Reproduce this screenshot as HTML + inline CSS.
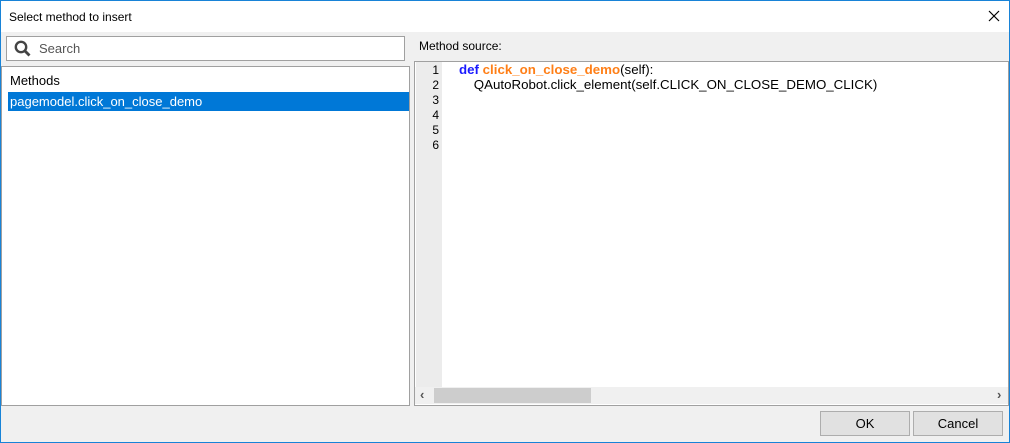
<!DOCTYPE html>
<html><head><style>
body{margin:0;width:1010px;height:443px;overflow:hidden;font-family:"Liberation Sans",sans-serif;font-size:12px;color:#000;}
.win{position:absolute;left:0;top:0;width:1008px;height:441px;border:1px solid #1883d7;background:#f0f0f0;}
.title{position:absolute;left:0;top:0;width:1008px;height:31px;background:#fff;}
.abs{position:absolute;}
</style></head><body>
<div class="win">
<div class="title"><div class="abs" style="left:8px;top:9px;">Select method to insert</div>
<svg class="abs" style="left:987px;top:9px" width="12" height="12"><path d="M1 1L11 11M11 1L1 11" stroke="#000" stroke-width="1.2"/></svg></div>
<div class="abs" style="left:5px;top:35px;width:397px;height:23px;background:#fff;border:1px solid #a0a0a0;">
<svg class="abs" style="left:7px;top:3px" width="18" height="18"><circle cx="7" cy="7" r="5.2" fill="none" stroke="#444" stroke-width="2.4"/><path d="M10.5 10.5L15.5 15.5" stroke="#444" stroke-width="2.8"/></svg>
<div class="abs" style="left:32px;top:4px;font-size:13px;color:#555;">Search</div></div>
<div class="abs" style="left:0px;top:65px;width:407px;height:338px;background:#fff;border:1px solid #a0a0a0;">
<div class="abs" style="left:8px;top:6px;font-size:13px;">Methods</div>
<div class="abs" style="left:6px;top:25px;width:401px;height:19px;background:#0078d7;color:#fff;font-size:13px;"><div style="padding:2px 0 0 2px">pagemodel.click_on_close_demo</div></div></div>
<div class="abs" style="left:418px;top:38px;">Method source:</div>
<div class="abs" style="left:413px;top:60px;width:593px;height:343px;background:#fff;border:1px solid #a0a0a0;">
<div class="abs" style="left:1px;top:0;width:26px;height:325px;background:#ececec;"></div>
<div class="abs" style="left:0;top:1px;width:24px;text-align:right;line-height:15px;font-size:12px;">1<br>2<br>3<br>4<br>5<br>6</div>
<div class="abs" style="left:44px;top:0px;line-height:15px;font-size:13.3px;white-space:pre;"><b style="color:#1a1aff">def</b> <b style="color:#ff7f17">click_on_close_demo</b>(self):
    QAutoRobot.click_element(self.CLICK_ON_CLOSE_DEMO_CLICK)</div>
<div class="abs" style="left:0;top:325px;width:593px;height:17px;background:#f0f0f0;">
<div class="abs" style="left:5px;top:0px;font-size:13px;font-weight:bold;color:#555">‹</div>
<div class="abs" style="left:19px;top:1px;width:157px;height:15px;background:#cdcdcd;"></div>
<div class="abs" style="left:582px;top:0px;font-size:13px;font-weight:bold;color:#555">›</div></div></div>
<div class="abs" style="left:819px;top:410px;width:88px;height:23px;background:#e1e1e1;border:1px solid #adadad;text-align:center;line-height:23px;font-size:13px;">OK</div>
<div class="abs" style="left:912px;top:410px;width:88px;height:23px;background:#e1e1e1;border:1px solid #adadad;text-align:center;line-height:23px;font-size:13px;">Cancel</div>
</div>
</body></html>
